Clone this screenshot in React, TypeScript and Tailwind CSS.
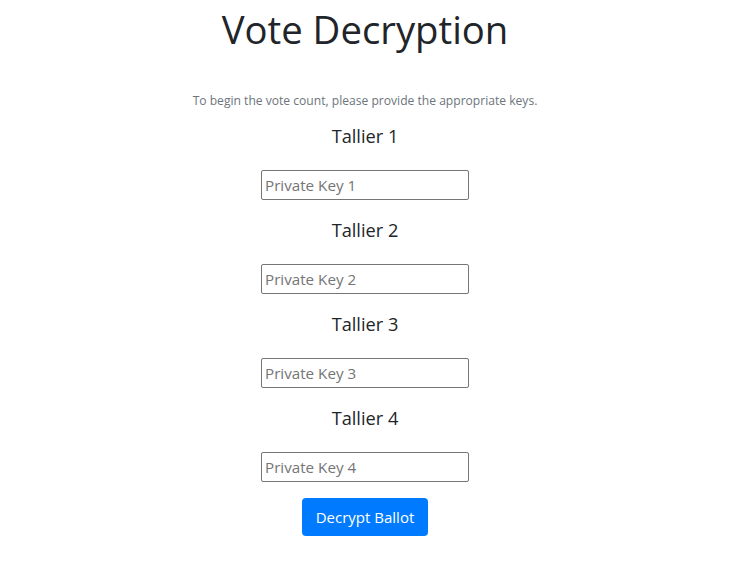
import React from 'react';

const talliers = [1, 2, 3, 4];

export default function App() {
  return (
    <div className="min-h-screen bg-white text-[#212529] font-['Segoe_UI','Open_Sans',sans-serif]">
      <div className="flex flex-col items-center pt-[5px] pr-[4px]">
        <h1 className="text-[38.3px] leading-[48px] font-normal">Vote Decryption</h1>

        <p className="mt-[38px] text-[12.1px] leading-[19px] text-[#6c757d]">
          To begin the vote count, please provide the appropriate keys.
        </p>

        {talliers.map((n, i) => (
          <div key={n} className="flex flex-col items-center">
            <h5 className={`text-[18.2px] leading-[24px] font-normal ${i === 0 ? 'mt-[14px]' : 'mt-[18px]'}`}>
              Tallier {n}
            </h5>
            <input
              type="text"
              placeholder={`Private Key ${n}`}
              className="mt-[22px] w-[208px] h-[30px] px-[3px] text-[15.2px] border border-[#767676] rounded-[2px] placeholder:text-[#757575] outline-none"
            />
          </div>
        ))}

        <button className="mt-[16px] w-[126px] h-[38px] rounded-[4px] bg-[#007bff] text-white text-[15px]">
          Decrypt Ballot
        </button>
      </div>
    </div>
  );
}
